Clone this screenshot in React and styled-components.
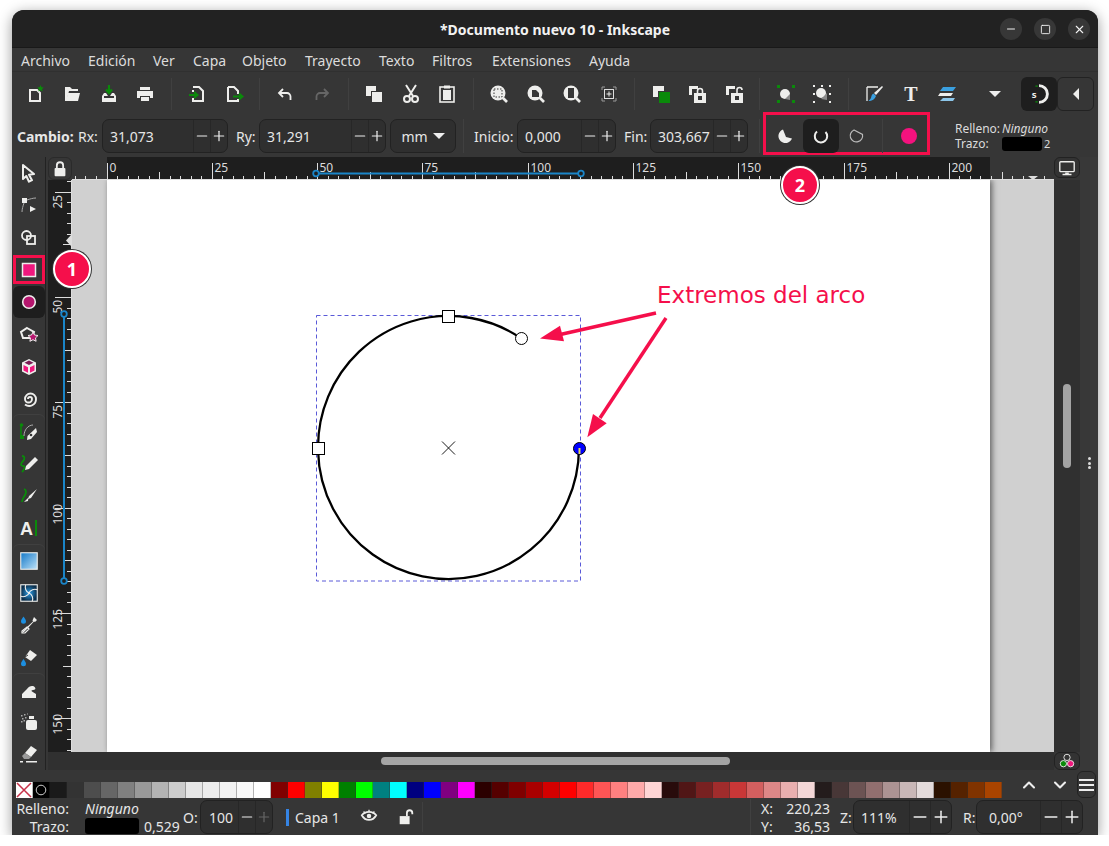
import React from 'react';
import styled, { createGlobalStyle } from 'styled-components';
import { Minus, Plus, X, Square, ChevronUp, ChevronDown } from 'lucide-react';

const W = '#eeeeec';
const G = '#0a8a0a';
const PINK = '#f0187e';
const RED = '#f50f4b';
const BLUE = '#1a85c8';
const UI_FONT = '"Noto Sans", "Open Sans", sans-serif';

const GlobalStyle = createGlobalStyle`
  html, body { margin: 0; background: #fff; }
  body { font-family: ${UI_FONT}; }
  * { box-sizing: border-box; }
`;

const Window = styled.div`
  position: relative;
  width: 1086px;
  height: 825px;
  margin: 10px 0 0 12px;
  display: flex;
  flex-direction: column;
  background: #363636;
  color: #e6e6e6;
  border-radius: 12px 12px 0 0;
  box-shadow: 0 3px 14px rgba(0, 0, 0, 0.4);
  overflow: hidden;
  font-size: 14px;
`;
const TitleBar = styled.header`
  position: relative;
  height: 38px;
  flex: none;
  display: flex;
  align-items: center;
  justify-content: center;
  padding-top: 2px;
  background: #222222;
  border-bottom: 1px solid #191919;
  font-weight: 700;
  font-size: 14px;
  color: #f2f2f2;
`;
const WinControls = styled.div`
  position: absolute;
  right: 8px;
  top: 8px;
  display: flex;
  gap: 12px;
`;
const WinButton = styled.div`
  width: 22px;
  height: 22px;
  border-radius: 50%;
  background: #373737;
  display: flex;
  align-items: center;
  justify-content: center;
  color: #f2f2f2;
`;
const MenuBar = styled.nav`
  height: 24px;
  flex: none;
  display: flex;
  align-items: center;
  padding: 2px 0 0 9px;
  border-bottom: 1px solid #303030;
  color: #dcdcdc;
`;
const MenuItem = styled.span`
  width: ${p => p.$w}px;
  white-space: nowrap;
`;
const Toolbar = styled.div`
  height: 41px;
  flex: none;
  display: flex;
  align-items: center;
  padding: 2px 0 0 5px;
`;
const ToolGroup = styled.div`
  display: flex;
`;
const IconButton = styled.div`
  width: 36.7px;
  height: 34px;
  flex: none;
  margin-left: ${p => p.$ml || 0}px;
  display: flex;
  align-items: center;
  justify-content: center;
  border-radius: 6px;
  background: ${p => (p.$active ? '#1e1e1e' : 'transparent')};
  border: ${p => (p.$framed ? '1px solid #222' : 'none')};
`;
const Separator = styled.div`
  width: 1px;
  height: ${p => p.$h || 32}px;
  margin-left: ${p => p.$ml ?? 7}px;
  margin-right: ${p => p.$mr ?? 7}px;
  background: #404040;
  flex: none;
`;
const ControlBar = styled.div`
  height: 44px;
  flex: none;
  display: flex;
  align-items: center;
  padding: 2px 0 0 5px;
`;
const FieldLabel = styled.span`
  width: ${p => p.$w}px;
  margin-left: ${p => p.$ml || 0}px;
  font-weight: ${p => (p.$bold ? 700 : 400)};
  white-space: nowrap;
  flex: none;
`;
const SpinBox = styled.div`
  width: ${p => p.$w}px;
  height: 34px;
  flex: none;
  display: flex;
  align-items: stretch;
  background: #2f2f2f;
  border: 1px solid #222;
  border-radius: 7px;
`;
const SpinValue = styled.span`
  flex: 1;
  display: flex;
  align-items: center;
  padding-left: ${p => p.$pad || 7}px;
`;
const StepBtn = styled.span`
  width: ${p => p.$w || 17}px;
  display: flex;
  align-items: center;
  justify-content: center;
  border-left: 1px solid #272727;
  color: ${p => (p.$dim ? '#666' : '#eee')};
`;
const UnitSelect = styled(SpinBox)`
  margin-left: 4px;
  align-items: center;
  justify-content: center;
  gap: 5px;
`;
const Caret = styled.span`
  border-left: 6px solid transparent;
  border-right: 6px solid transparent;
  border-top: 6px solid #eee;
`;
const MarkedBox = styled.div`
  width: 167px;
  height: 43px;
  margin: -3px 0 0 3px;
  align-self: flex-start;
  display: flex;
  align-items: flex-start;
  padding: 4px 0 0 1px;
  border: 3px solid ${RED};
  flex: none;
`;
const ArcButton = styled(IconButton)`
  width: 36px;
`;
const StyleBlock = styled.div`
  margin-left: 25px;
  font-size: 12px;
  line-height: 15px;
  display: grid;
  grid-template-columns: 47px auto auto;
  align-items: center;
  color: #dcdcdc;
`;
const Italic = styled.span`
  font-style: italic;
  white-space: nowrap;
  grid-column: ${p => p.$span || 'auto'};
`;
const StrokeSwatch = styled.span`
  width: 40px;
  height: 14px;
  background: linear-gradient(90deg, #000 49%, #333 49%, #333 51%, #000 51%);
  border-radius: 3px;
`;
const StrokeNum = styled.span`
  margin-left: 2px;
  font-size: 11px;
`;
const Main = styled.div`
  height: 613px;
  flex: none;
  display: flex;
`;
const Toolbox = styled.aside`
  width: 34px;
  margin-right: 2px;
  border-right: 1px solid #222;
  flex: none;
`;
const ToolButton = styled.div`
  position: relative;
  width: 32px;
  height: 32.3px;
  margin-left: 1px;
  display: flex;
  align-items: center;
  justify-content: center;
  border-radius: 6px;
  background: ${p => (p.$active ? '#1e1e1e' : 'transparent')};
  box-shadow: ${p => (p.$sep ? '0 -1px 0 #404040' : 'none')};
  &::after {
    content: ${p => (p.$marked ? '""' : 'none')};
    position: absolute;
    inset: 1px 0 2px;
    border: 3px solid ${RED};
  }
`;
const Workspace = styled.div`
  display: grid;
  grid-template-columns: 24px 982px 26px 18px;
  grid-template-rows: 23px 572px 18px;
`;
const LockCell = styled.div`
  background: #363636;
  display: flex;
  align-items: center;
  justify-content: center;
  border: 1px solid #2a2a2a;
  border-radius: 6px;
`;
const RulerSvg = styled.svg`
  display: block;
`;
const MonitorButton = styled.div`
  display: flex;
  align-items: center;
  justify-content: center;
  background: #333;
  border: 1px solid #222;
  border-radius: 6px;
  margin-bottom: 2px;
`;
const Canvas = styled.div`
  display: flex;
  padding-left: 35px;
  background: #d0d0d0;
  overflow: hidden;
`;
const Page = styled.div`
  position: relative;
  width: 883px;
  height: 100%;
  background: #fff;
  box-shadow: 2px 0 6px rgba(0, 0, 0, 0.55);
`;
const Drawing = styled.svg`
  position: absolute;
  inset: 0;
`;
const VScroll = styled.div`
  background: #303030;
  display: flex;
  justify-content: center;
  padding-top: 204px;
`;
const VThumb = styled.div`
  width: 8px;
  height: 84px;
  border-radius: 4px;
  background: #a3a3a3;
`;
const OptionsColumn = styled.div`
  grid-column: 4;
  grid-row: 1 / span 3;
  background: #383838;
  display: flex;
  flex-direction: column;
  align-items: center;
  gap: 1.5px;
  padding-top: 300px;
`;
const Dot = styled.span`
  width: 3px;
  height: 3px;
  border-radius: 50%;
  background: #ddd;
`;
const HScroll = styled.div`
  background: #303030;
  padding: 5px 0 0 309px;
`;
const HThumb = styled.div`
  width: 349px;
  height: 8px;
  border-radius: 4px;
  background: #a3a3a3;
`;
const BottomCorner = styled.div`
  background: #303030;
`;
const ColorButton = styled(MonitorButton)`
  margin: 0;
`;
const PaletteRow = styled.div`
  position: relative;
  height: 28px;
  flex: none;
  display: flex;
  padding: 12px 0 0 4px;
`;
const Swatch = styled.span`
  width: 17px;
  height: 16px;
  flex: none;
  background: ${p => p.$c};
  border-right: 1px solid rgba(50, 50, 50, 0.35);
  display: flex;
`;
const PaletteTools = styled.div`
  position: absolute;
  right: 2px;
  top: 1px;
  display: flex;
  align-items: center;
  color: #eee;
`;
const PaletteArrow = styled.span`
  width: 31px;
  display: flex;
  justify-content: center;
`;
const MenuButton = styled.div`
  width: 19px;
  height: 27px;
  margin-left: 2px;
  border: 1px solid #222;
  border-radius: 6px;
  display: flex;
  flex-direction: column;
  justify-content: center;
  gap: 3px;
  padding: 0 1px;
`;
const MenuLine = styled.span`
  height: 2px;
  background: #eee;
`;
const StatusBar = styled.footer`
  height: 37px;
  flex: none;
  display: flex;
  align-items: center;
  padding: 1px 15px 0 0;
`;
const FillLabels = styled.div`
  width: 57px;
  padding-top: 2px;
  text-align: right;
  line-height: 18px;
  flex: none;
`;
const FillValues = styled.div`
  width: 59px;
  margin-left: 16px;
  flex: none;
  line-height: 18px;
`;
const FillSwatch = styled.div`
  width: 54px;
  height: 16px;
  background: #000;
  border-radius: 3px;
`;
const StrokeWidth = styled.span`
  align-self: flex-end;
  margin-bottom: -1px;
  line-height: 18px;
  width: 39px;
  flex: none;
`;
const LayerBar = styled.span`
  width: 3px;
  height: 17px;
  margin: 0 6px 0 13px;
  background: #3584e4;
  flex: none;
`;
const LayerName = styled.span`
  width: 55px;
  flex: none;
`;
const LayerIcon = styled.span`
  width: 37px;
  display: flex;
  justify-content: center;
  flex: none;
`;
const Coords = styled.div`
  margin-left: auto;
  width: 88px;
  height: 100%;
  border-left: 1px solid #404040;
  padding: 2px 8px 0 10px;
  display: grid;
  grid-template-columns: 1fr auto;
  align-content: center;
  line-height: 18px;
  font-size: 14px;
`;
const CoordValue = styled.span`
  text-align: right;
`;
const Badge = styled.div`
  position: absolute;
  left: ${p => p.$x}px;
  top: ${p => p.$y}px;
  width: 38px;
  height: 38px;
  border-radius: 50%;
  background: ${RED};
  border: 2px solid #fff;
  box-shadow: 0 0 0 1px #333;
  display: flex;
  align-items: center;
  justify-content: center;
  color: #fff;
  font-weight: 700;
  font-size: 18px;
`;

const Ico = ({ children, s = 20 }) => (
  <svg width={s} height={s} viewBox="0 0 20 20" fill="none">{children}</svg>
);
const overlapSquares = (
  <>
    <rect x="2" y="2" width="10" height="10" fill={W} />
    <rect x="7" y="7" width="11" height="11" fill="#363636" />
    <rect x="8" y="8" width="10" height="10" fill={W} />
  </>
);
const Lens = ({ children }) => (
  <>
    <circle cx="9" cy="9" r="7.5" fill={W} />
    <path d="M14 14l4 4" stroke={W} strokeWidth="2.6" />
    {children}
  </>
);

const toolbarGroups = [
  [
    <Ico><path d="M5 6h7l3 3v8H5z" stroke={W} strokeWidth="2" /><path d="M15.5 1l1 2.2 2.3.3-1.7 1.6.5 2.4-2.1-1.2-2.1 1.2.5-2.4-1.7-1.6 2.3-.3z" fill={G} /></Ico>,
    <Ico><path d="M3 3h5l2 2h6v2H7L5 15V17H3z" fill={W} /><path d="M6 9h12l-2 8H4z" fill={W} /></Ico>,
    <Ico><path d="M10 1v7M7 5.5L10 9l3-3.5" stroke={G} strokeWidth="2.2" /><path d="M3 12l2-3h2l2 3h2l2-3h2l2 3v6H3z" fill={W} /><rect x="5" y="12" width="10" height="2" fill="#363636" /></Ico>,
    <Ico><rect x="5" y="3" width="10" height="3" fill={W} /><path d="M2 7h16v7h-3v-2H5v2H2z" fill={W} /><rect x="6" y="13" width="8" height="4" fill={W} /></Ico>,
  ],
  [
    <Ico><path d="M6 3h6l4 4v10H6v-3" stroke={W} strokeWidth="2" /><path d="M6 6v2" stroke={W} strokeWidth="2" /><path d="M2 11h8M7 8l3.5 3L7 14" stroke={G} strokeWidth="2" /></Ico>,
    <Ico><path d="M4 3h6l4 4v3M14 15v2H4V3" stroke={W} strokeWidth="2" /><path d="M9 12.5h9M15 9.5l3.5 3-3.5 3" stroke={G} strokeWidth="2" /></Ico>,
  ],
  [
    <Ico><path d="M8 5L4 9l4 4" stroke={W} strokeWidth="1.8" /><path d="M4 9h8a3.500 3.500 0 0 1 3.500 3.500V16" stroke={W} strokeWidth="1.8" /></Ico>,
    <Ico><path d="M12 5l4 4-4 4" stroke="#666" strokeWidth="1.8" /><path d="M16 9H8a3.500 3.500 0 0 0-3.500 3.500V16" stroke="#666" strokeWidth="1.8" /></Ico>,
  ],
  [
    <Ico>{overlapSquares}</Ico>,
    <Ico><path d="M5 1l7 11M15 1L8 12" stroke={W} strokeWidth="2" /><circle cx="6" cy="15" r="3" stroke={W} strokeWidth="2" /><circle cx="14" cy="15" r="3" stroke={W} strokeWidth="2" /></Ico>,
    <Ico><rect x="3" y="3" width="14" height="15" stroke={W} strokeWidth="1.6" /><rect x="7" y="1.5" width="6" height="3" fill={W} /><rect x="6" y="6" width="8" height="10" fill={W} /></Ico>,
  ],
  [
    <Ico><Lens><rect x="5" y="5" width="8" height="8" stroke="#363636" strokeDasharray="1.5 1.5" /></Lens></Ico>,
    <Ico><Lens><path d="M6 6h4l3 3v4H6z" fill="#363636" /></Lens></Ico>,
    <Ico><Lens><rect x="6" y="4" width="6" height="10" fill="#363636" /></Lens></Ico>,
    <Ico><path d="M3 6V3h3M14 3h3v3M17 14v3h-3M6 17H3v-3" stroke="#999" /><rect x="5.500" y="5.500" width="9" height="9" stroke="#ddd" /><path d="M10 7.500v5M7.500 10h5" stroke={W} /></Ico>,
  ],
  [
    <Ico><rect x="2" y="2" width="11" height="11" fill={W} /><rect x="7" y="7" width="12" height="12" fill="#363636" /><rect x="8" y="8" width="11" height="11" fill={G} /></Ico>,
    <Ico><rect x="2" y="2" width="9" height="9" fill={W} /><rect x="5" y="5" width="9" height="9" fill="#363636" /><path d="M7 9h12v10H7z" fill={W} /><path d="M10.5 9V7a2.5 2.5 0 0 1 5 0v2" stroke={W} strokeWidth="1.6" /><rect x="11" y="12" width="4" height="4" fill="#363636" /></Ico>,
    <Ico><rect x="2" y="2" width="9" height="9" fill={W} /><rect x="5" y="5" width="9" height="9" fill="#363636" /><path d="M7 9h12v10H7z" fill={W} /><path d="M13 9V6a2.5 2.5 0 0 1 5 0" stroke={W} strokeWidth="1.6" /><rect x="11" y="12" width="4" height="4" fill="#363636" /></Ico>,
  ],
  [
    <Ico><circle cx="9" cy="10" r="5" fill={W} /><path d="M9 15l5-5v6z" fill="#888" /><path d="M1 1h3v3H1zM16 1h3v3h-3zM1 16h3v3H1zM16 16h3v3h-3z" fill={G} /></Ico>,
    <Ico><circle cx="9" cy="9" r="5" fill={W} /><path d="M9 15l6-6v7z" fill="#888" /><path d="M1 1h2v2H1zM17 1h2v2h-2zM1 17h2v2H1zM17 17h2v2h-2zM9 1h2v2H9zM1 9h2v2H1zM17 9h2v2h-2z" fill={W} /></Ico>,
  ],
  [
    <Ico><path d="M3 3h11M3 3v14" stroke={W} strokeWidth="1.3" /><path d="M18 2l1 1-7 8-2-2z" fill={W} /><path d="M9.500 9.500l2.500 2.500c-1 3-4 5-7.500 5 2-1.500 2.500-3 3-5 .3-1 1-2 2-2.500z" fill="#3aa0e0" /></Ico>,
    <Ico><text x="10" y="17" textAnchor="middle" fontFamily="Liberation Serif, serif" fontWeight="700" fontSize="20" fill={W}>T</text></Ico>,
    <Ico><path d="M6 3h13l-3 4H3z" fill="#3aa0e0" /><path d="M3 9h13l-2 3H1z" fill={W} /><path d="M6 14h12l-2 3H3z" fill="#8cc6ea" /></Ico>,
  ],
];

const toolIcons = [
  <Ico><path d="M4 2l11 9-5 .7 3 5.500-3 1.500-2.700-5.700L4 16z" stroke={W} strokeWidth="2" strokeLinejoin="round" /></Ico>,
  <Ico><rect x="3" y="3" width="5" height="5" fill={W} /><path d="M5 8c-1 3-2 6-2 9M8 5c3-1 6-2 9-2" stroke="#aaa" /><path d="M11 11l6 3-6 3z" fill={W} /></Ico>,
  <Ico><circle cx="7.500" cy="7.500" r="4.500" stroke={W} strokeWidth="1.800" /><rect x="8" y="8" width="8" height="8" stroke={W} strokeWidth="1.800" /></Ico>,
  <Ico><rect x="3.500" y="3.500" width="13" height="13" fill={PINK} stroke={W} strokeWidth="1.500" /></Ico>,
  <Ico><circle cx="10" cy="10" r="6.300" fill="#b5166e" stroke={W} strokeWidth="1.600" /></Ico>,
  <Ico><path d="M8 3l7 4-2 6H4L2 7z" stroke={W} strokeWidth="2" /><path d="M14 7l1.500 3 3.500.5-2.500 2.400.6 3.400-3.100-1.600-3.100 1.600.6-3.400L9 10.500l3.500-.5z" fill="#b5166e" stroke={W} /></Ico>,
  <Ico><path d="M10 2l7 3.500v9L10 18l-7-3.500v-9z" fill={W} /><path d="M10 3.500l4.500 2.300L10 8 5.500 5.800z" fill="#7d1a55" /><path d="M4.500 8l4.500 2.300v5.500l-4.500-2.300zM15.500 8L11 10.300v5.500l4.500-2.300z" fill={PINK} /></Ico>,
  <Ico><path d="M9 10A2 2 0 0 1 13 10A3.500 3.500 0 0 1 6 10A5.500 5.500 0 0 1 17 10A6.800 6.800 0 0 1 6 15.500" stroke={W} strokeWidth="1.900" /></Ico>,
  <Ico><path d="M2 3v12" stroke={G} strokeWidth="1.500" /><circle cx="2.500" cy="3" r="1.800" fill={G} /><rect x="1" y="13" width="4" height="4" fill={G} /><path d="M5 14c0-6 4-11 9-11" stroke="#aaa" /><path d="M17 6l1 4-6 7-4 1 .5-4z" fill={W} /><circle cx="12" cy="13" r="1.300" fill="#363636" /></Ico>,
  <Ico><path d="M3 2c3 0 3 3 1 5S1 12 4 12s1 4-1 6" stroke={G} strokeWidth="1.800" /><path d="M16 3l3 3-9 9-4 1 1-4z" fill={W} /></Ico>,
  <Ico><path d="M5 3c3 1 2 4 1 6s-3 4-3 7" stroke={G} strokeWidth="1.800" /><path d="M18 3L10 10l-1 3 3-1zM9.500 11.500L7 14l-2 2 4-1z" fill={W} /></Ico>,
  <Ico><text x="7.500" y="17" textAnchor="middle" fontFamily="Liberation Sans, sans-serif" fontWeight="700" fontSize="18" fill={W}>A</text><rect x="16" y="2" width="2" height="16" fill={G} /></Ico>,
  <Ico s={22}><defs><linearGradient id="gradFill" x1="0" y1="0" x2="1" y2="1"><stop offset="0" stopColor="#1278c8" /><stop offset="1" stopColor="#bfe2f7" /></linearGradient></defs><rect x="2.500" y="2.500" width="15" height="15" fill="url(#gradFill)" stroke={W} /></Ico>,
  <Ico s={22}><defs><radialGradient id="meshFill"><stop offset="0" stopColor="#2a9ee8" /><stop offset="1" stopColor="#0c2e4a" /></radialGradient></defs><rect x="2.500" y="2.500" width="15" height="15" fill="url(#meshFill)" stroke={W} /><path d="M10 10C7 9 6 5 7 2.500M10 10C11 7 15 6 17.500 7M10 10C13 11 14 15 13 17.500M10 10C9 13 5 14 2.500 13" stroke={W} strokeWidth="1" /></Ico>,
  <Ico><path d="M4.500 1.500C6 4 7 5 7 6.300a2.500 2.500 0 0 1-5 0C2 5 3 4 4.500 1.500z" fill="#1d8fe0" /><path d="M15 2l3 3-2 2-1-.5L9 13l-4 4-2 1 1-2 4-4 6-5.500-.5-1z" fill={W} /><path d="M8 12l2 2-4 4H3v-2z" stroke={W} strokeWidth="1.200" /></Ico>,
  <Ico><path d="M11 2l7 5-6 6-6-4z" fill={W} /><path d="M9 7l-3 2" stroke="#363636" /><path d="M4.500 11c1.500 2.500 2.500 3.500 2.500 4.800a2.500 2.500 0 0 1-5 0c0-1.300 1-2.300 2.500-4.800z" fill="#1d8fe0" /></Ico>,
  <Ico><path d="M3 18v-4l5-5c2-3 6-4 8-1.500 1 1.500 0 2.500-2 2.500-1.500 0-2 1-1 1.500l4 2.500v4z" fill={W} /></Ico>,
  <Ico><rect x="7" y="8" width="11" height="10" rx="2" fill={W} /><rect x="10" y="4" width="5" height="3" fill={W} /><path d="M2 3h1.500v1.500H2zM5 2h1.500v1.500H5zM3 6h1.500v1.500H3zM6 5h1.500v1.500H6zM2 9h1.500v1.500H2zM4.500 8h1.500v1.500H4.500zM8 1.500h1v1H8z" fill="#aaa" /></Ico>,
  <Ico><path d="M12 2l6 4-6 7-6-4z" fill={W} /><path d="M6 9l6 4-2 2H5l-2-3z" fill="#999" /><path d="M1 17h3v1.500H1zM7 17h11v1.500H7z" fill={W} /></Ico>,
];

const paletteColors = ['#000', '#1a1a1a', '#333', '#4d4d4d', '#666', '#808080', '#999', '#b3b3b3', '#ccc', '#e6e6e6', '#ececec', '#f2f2f2', '#f9f9f9', '#fff', '#800000', '#f00', '#808000', '#ff0', '#008000', '#0f0', '#008080', '#0ff', '#000080', '#00f', '#800080', '#f0f', '#2b0000', '#500', '#800000', '#a00', '#d40000', '#f00', '#ff2a2a', '#f55', '#ff8080', '#faa', '#ffd5d5', '#280b0b', '#501616', '#782121', '#a02c2c', '#c83737', '#d35f5f', '#de8787', '#e9afaf', '#f4d7d7', '#241c1c', '#483737', '#6c5353', '#916f6f', '#ac9393', '#c8b7b7', '#e3dbdb', '#2b1100', '#520', '#803300', '#a40'];

const menuItems = [['Archivo', 67], ['Edición', 65], ['Ver', 40], ['Capa', 49], ['Objeto', 63], ['Trayecto', 74], ['Texto', 53], ['Filtros', 60], ['Extensiones', 97], ['Ayuda', 50]];

const TICK = 10.53;

const HorizontalRuler = () => {
  const ticks = [];
  for (let i = -3; i <= 90; i++) {
    const x = Math.round(34.5 + i * TICK) + 0.5;
    const major = i % 10 === 0;
    const mid = i % 5 === 0;
    ticks.push(<line key={i} x1={x} x2={x} y1={major ? 6 : mid ? 15 : 19} y2={23} stroke="#ddd" />);
    if (major && i >= 0 && i <= 80) {
      ticks.push(<text key={`t${i}`} x={x + 2} y={15} fontSize="12" fill="#dcdcdc" fontFamily={UI_FONT}>{i * 2.5}</text>);
    }
  }
  return (
    <RulerSvg width="982" height="23">
      <rect width="982" height="23" fill="#363636" />
      <rect x="35" width="883" height="23" fill="#1e1e1e" />
      {ticks}
      <line x1="0" x2="982" y1="22.500" y2="22.500" stroke="#ddd" />
      <path d="M244 16.500h262" stroke={BLUE} strokeWidth="2" />
      <circle cx="244" cy="16.500" r="2.800" fill="#1e1e1e" stroke={BLUE} strokeWidth="1.800" />
      <circle cx="509" cy="16.500" r="2.800" fill="#1e1e1e" stroke={BLUE} strokeWidth="1.800" />
      <path d="M956 19h10l-5 4z" fill="#ddd" />
    </RulerSvg>
  );
};

const VerticalRuler = () => {
  const ticks = [];
  for (let i = 9; i <= 63; i++) {
    const y = Math.round(-93.5 + i * TICK) + 0.5;
    const major = i % 10 === 0;
    const mid = i % 5 === 0;
    ticks.push(<line key={i} y1={y} y2={y} x1={major ? 7 : mid ? 15 : 19} x2={24} stroke="#ddd" />);
    if (major) {
      ticks.push(<text key={`t${i}`} transform={`translate(14 ${y + 16}) rotate(-90)`} fontSize="12" fill="#dcdcdc" fontFamily={UI_FONT}>{i * 2.5}</text>);
    }
  }
  return (
    <RulerSvg width="24" height="572">
      <rect width="24" height="572" fill="#1e1e1e" />
      {ticks}
      <line x1="23.500" x2="23.500" y1="0" y2="572" stroke="#ddd" />
      <path d="M23 55v11l-5-5.500z" fill="#ddd" />
      <path d="M16 134v264" stroke={BLUE} strokeWidth="2" />
      <circle cx="16" cy="134" r="2.800" fill="#1e1e1e" stroke={BLUE} strokeWidth="1.800" />
      <circle cx="16" cy="401" r="2.800" fill="#1e1e1e" stroke={BLUE} strokeWidth="1.800" />
    </RulerSvg>
  );
};

const Spin = ({ value, w, step, pad, dimPlus }) => (
  <SpinBox $w={w}>
    <SpinValue $pad={pad}>{value}</SpinValue>
    <StepBtn $w={step}><Minus size={22} strokeWidth={1.8} /></StepBtn>
    <StepBtn $w={step} $dim={dimPlus}><Plus size={22} strokeWidth={1.8} /></StepBtn>
  </SpinBox>
);

const ArcDrawing = () => (
  <Drawing width="883" height="572" viewBox="107 180 883 572">
    <rect x="316.500" y="315.500" width="264" height="265.500" fill="none" stroke="#5a5ad8" strokeDasharray="4 3" />
    <path d="M579 448A130.500 131.500 0 1 1 521.500 338.500" fill="none" stroke="#000" strokeWidth="2.300" />
    <path d="M442 441.500l13 13M455 441.500l-13 13" stroke="#000" strokeWidth="0.900" />
    <rect x="442.500" y="310.500" width="12" height="12" fill="#fff" stroke="#000" />
    <rect x="312.500" y="442.500" width="12" height="12" fill="#fff" stroke="#000" />
    <circle cx="521.500" cy="338.500" r="6" fill="#fff" stroke="#000" />
    <circle cx="579.500" cy="448.500" r="6" fill="#0000ff" stroke="#000" />
    <rect x="578.500" y="448" width="2" height="6" fill="#e6d85a" />
    <path d="M656 313L558 335" stroke={RED} strokeWidth="3.500" />
    <path d="M540 338.500L560 325.700L564 341.300z" fill={RED} />
    <path d="M666 318L600 418" stroke={RED} strokeWidth="3.500" />
    <path d="M587.300 437.300L593 414L606.700 423.300z" fill={RED} />
    <text x="657" y="303" fontFamily="DejaVu Sans, sans-serif" fontSize="23" fill={RED}>Extremos del arco</text>
  </Drawing>
);

export default function App() {
  return (
    <>
      <GlobalStyle />
      <Window>
        <TitleBar>
          *Documento nuevo 10 - Inkscape
          <WinControls>
            <WinButton><Minus size={12} strokeWidth={2} /></WinButton>
            <WinButton><Square size={11} strokeWidth={2} /></WinButton>
            <WinButton><X size={13} strokeWidth={2} /></WinButton>
          </WinControls>
        </TitleBar>
        <MenuBar>
          {menuItems.map(([name, w]) => <MenuItem key={name} $w={w}>{name}</MenuItem>)}
        </MenuBar>
        <Toolbar>
          {toolbarGroups.map((group, i) => (
            <React.Fragment key={i}>
              {i > 0 && <Separator />}
              <ToolGroup>
                {group.map((icon, j) => <IconButton key={j}>{icon}</IconButton>)}
              </ToolGroup>
            </React.Fragment>
          ))}
          <IconButton $ml={11}><Caret /></IconButton>
          <IconButton $ml={7} $active>
            <Ico s={24}>
              <path d="M10 3a7 7 0 1 1 0 14" stroke={W} strokeWidth="2.400" />
              <path d="M8 3v1M8 16v1" stroke={G} strokeWidth="2" />
              <text x="4" y="13" fontSize="8" fontWeight="700" fill={W} fontFamily={UI_FONT}>s</text>
            </Ico>
          </IconButton>
          <IconButton $framed><Ico><path d="M13 4v12l-6-6z" fill={W} /></Ico></IconButton>
        </Toolbar>
        <ControlBar>
          <FieldLabel $w={61} $bold>Cambio:</FieldLabel>
          <FieldLabel $w={24}>Rx:</FieldLabel>
          <Spin value="31,073" w={126} />
          <FieldLabel $w={23} $ml={8}>Ry:</FieldLabel>
          <Spin value="31,291" w={127} />
          <UnitSelect $w={66}>mm <Caret /></UnitSelect>
          <Separator $h={34} />
          <FieldLabel $w={43} $ml={3}>Inicio:</FieldLabel>
          <Spin value="0,000" w={99} />
          <FieldLabel $w={26} $ml={8}>Fin:</FieldLabel>
          <Spin value="303,667" w={98} />
          <Separator $h={34} $ml={11} $mr={0} />
          <MarkedBox>
            <ArcButton><Ico><path d="M8 3.500A7 7 0 1 0 17 12.500L11 11z" fill={W} /></Ico></ArcButton>
            <ArcButton $active><Ico><path d="M14.500 6A6.200 6.200 0 1 1 6 5.500" stroke={W} strokeWidth="2" /></Ico></ArcButton>
            <ArcButton><Ico><path d="M7 4L15.500 8.500A6.200 6.200 0 1 1 7 4z" stroke="#bbb" strokeWidth="1.200" /></Ico></ArcButton>
            <Separator $h={34} $ml={7} $mr={8} />
            <ArcButton><svg width="18" height="18"><circle cx="9" cy="9" r="8" fill="#f5127e" /></svg></ArcButton>
          </MarkedBox>
          <StyleBlock>
            <span>Relleno:</span><Italic $span="span 2">Ninguno</Italic>
            <span>Trazo:</span><StrokeSwatch /><StrokeNum>2</StrokeNum>
          </StyleBlock>
        </ControlBar>
        <Main>
          <Toolbox>
            {toolIcons.map((icon, i) => (
              <ToolButton key={i} $sep={i === 8 || i === 12 || i === 16} $marked={i === 3} $active={i === 4}>{icon}</ToolButton>
            ))}
          </Toolbox>
          <Workspace>
            <LockCell>
              <Ico s={18}><rect x="4" y="9" width="12" height="9" rx="1" fill={W} /><path d="M6.500 9V6a3.500 3.500 0 0 1 7 0v3" stroke={W} strokeWidth="2" /></Ico>
            </LockCell>
            <HorizontalRuler />
            <MonitorButton>
              <Ico s={18}><rect x="2" y="3" width="16" height="11" rx="1" stroke={W} strokeWidth="1.500" /><path d="M8 15h4v1.500h3V18H5v-1.500h3z" fill={W} /></Ico>
            </MonitorButton>
            <OptionsColumn><Dot /><Dot /><Dot /></OptionsColumn>
            <VerticalRuler />
            <Canvas><Page><ArcDrawing /></Page></Canvas>
            <VScroll><VThumb /></VScroll>
            <BottomCorner />
            <HScroll><HThumb /></HScroll>
            <ColorButton>
              <Ico s={18}><circle cx="10" cy="6" r="3.500" stroke={W} /><circle cx="6" cy="13" r="3.500" fill={G} stroke={W} /><circle cx="14" cy="13" r="3.500" fill={PINK} stroke={W} /></Ico>
            </ColorButton>
          </Workspace>
        </Main>
        <PaletteRow>
          <Swatch $c="#fff">
            <svg width="16" height="16"><path d="M1 1l14 14M15 1L1 15" stroke="#c8324a" strokeWidth="1.500" /></svg>
          </Swatch>
          <Swatch $c="#000">
            <svg width="16" height="16"><circle cx="8" cy="8" r="4.800" fill="none" stroke="#ccc" /></svg>
          </Swatch>
          {paletteColors.slice(1).map((c, i) => <Swatch key={i} $c={c} />)}
          <PaletteTools>
            <PaletteArrow><ChevronUp size={20} strokeWidth={2.500} /></PaletteArrow>
            <PaletteArrow><ChevronDown size={20} strokeWidth={2.500} /></PaletteArrow>
            <MenuButton><MenuLine /><MenuLine /><MenuLine /></MenuButton>
          </PaletteTools>
        </PaletteRow>
        <StatusBar>
          <FillLabels>Relleno:<br />Trazo:</FillLabels>
          <FillValues><Italic>Ninguno</Italic><FillSwatch /></FillValues>
          <StrokeWidth>0,529</StrokeWidth>
          <FieldLabel $w={17}>O:</FieldLabel>
          <Spin value="100" w={73} pad={8} dimPlus />
          <LayerBar />
          <LayerName>Capa 1</LayerName>
          <LayerIcon>
            <Ico s={18}><path d="M2 8c4-5 12-5 16 0-4 7-12 7-16 0z" stroke={W} strokeWidth="2" /><circle cx="10" cy="9" r="2.500" fill={W} /><path d="M4 4l2 2M10 2v2M16 4l-2 2" stroke={W} strokeWidth="1.500" /></Ico>
          </LayerIcon>
          <LayerIcon>
            <Ico s={18}><rect x="3" y="9" width="11" height="9" fill={W} /><path d="M11 9V5.500a3 3 0 0 1 6 0V7" stroke={W} strokeWidth="2" /></Ico>
          </LayerIcon>
          <Separator $h={30} $ml={-2} $mr={0} />
          <Coords>
            <span>X:</span><CoordValue>220,23</CoordValue>
            <span>Y:</span><CoordValue>36,53</CoordValue>
          </Coords>
          <FieldLabel $w={13} $ml={2}>Z:</FieldLabel>
          <Spin value="111%" w={99} step={21} />
          <FieldLabel $w={13} $ml={11}>R:</FieldLabel>
          <Spin value="0,00°" w={107} step={21} pad={12} />
        </StatusBar>
        <Badge $x={41} $y={240}>1</Badge>
        <Badge $x={769} $y={156}>2</Badge>
      </Window>
    </>
  );
}
